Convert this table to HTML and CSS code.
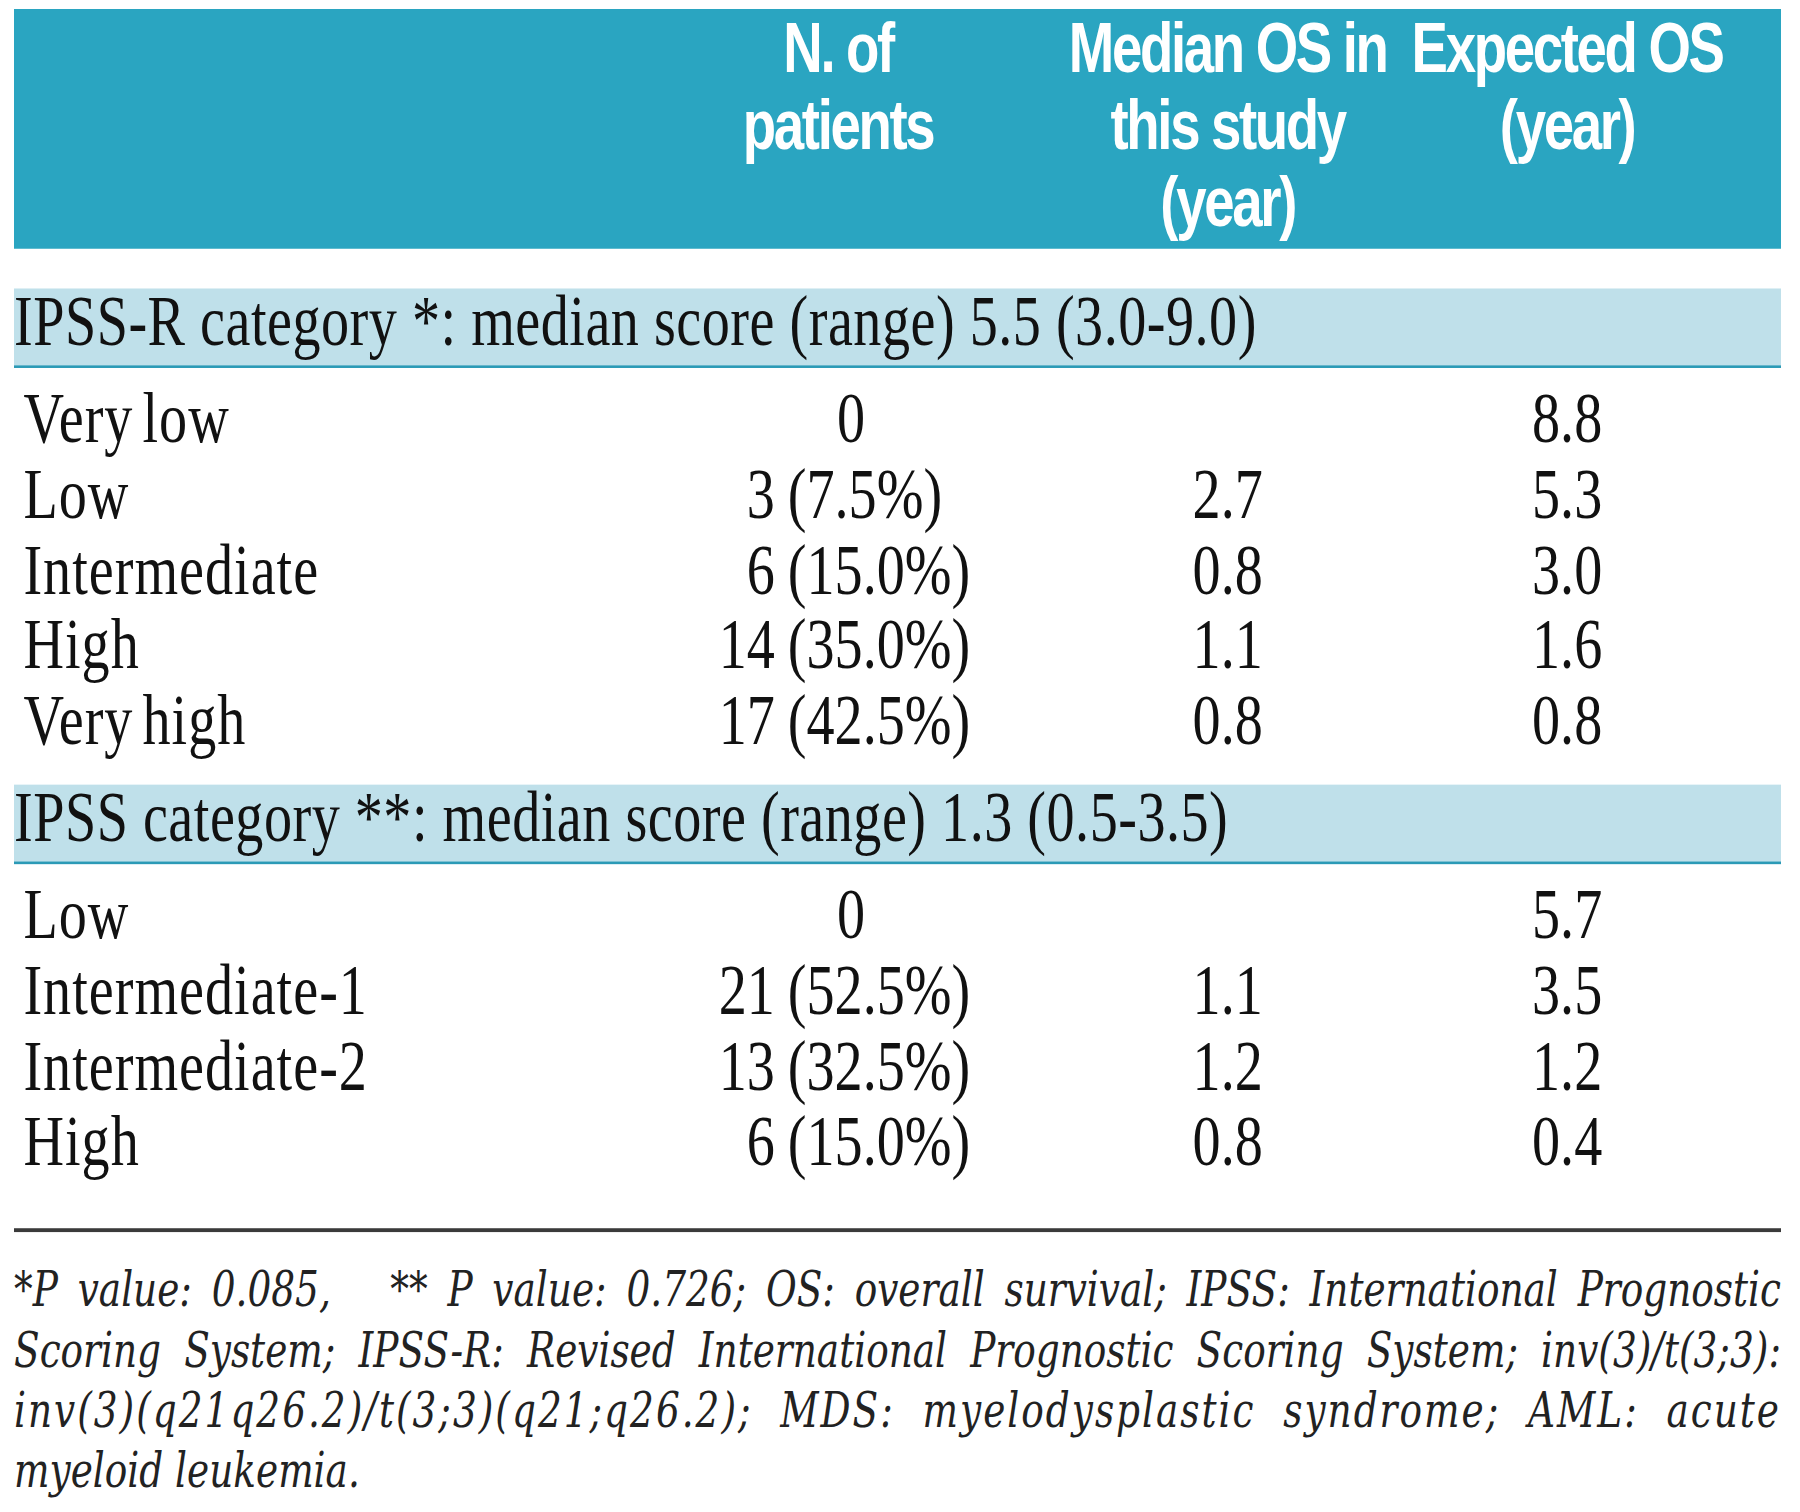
FILE: index.html
```html
<!DOCTYPE html>
<html lang="en">
<head>
<meta charset="utf-8">
<title>IPSS-R and IPSS categories</title>
<link rel="stylesheet" href="styles.css">
</head>
<body>
<div class="sheet">
  <div class="head">
    <div class="hc"></div>
    <div class="hc hc-n"><span>N. of</span><span>patients</span></div>
    <div class="hc"><span>Median OS in</span><span>this study</span><span>(year)</span></div>
    <div class="hc"><span>Expected OS</span><span>(year)</span></div>
  </div>

  <div class="band">IPSS-R category *: median score (range) 5.5 (3.0-9.0)</div>
  <div class="rows rows-a">
    <div class="lbl">Very low</div><div class="n zero">0</div><div class="v"></div><div class="v">8.8</div>
    <div class="lbl">Low</div><div class="n"><span class="c">3</span><span>(7.5%)</span></div><div class="v">2.7</div><div class="v">5.3</div>
    <div class="lbl">Intermediate</div><div class="n"><span class="c">6</span><span>(15.0%)</span></div><div class="v">0.8</div><div class="v">3.0</div>
    <div class="lbl">High</div><div class="n"><span class="c">14</span><span>(35.0%)</span></div><div class="v">1.1</div><div class="v">1.6</div>
    <div class="lbl">Very high</div><div class="n"><span class="c">17</span><span>(42.5%)</span></div><div class="v">0.8</div><div class="v">0.8</div>
  </div>

  <div class="band">IPSS category **: median score (range) 1.3 (0.5-3.5)</div>
  <div class="rows rows-b">
    <div class="lbl">Low</div><div class="n zero">0</div><div class="v"></div><div class="v">5.7</div>
    <div class="lbl">Intermediate-1</div><div class="n"><span class="c">21</span><span>(52.5%)</span></div><div class="v">1.1</div><div class="v">3.5</div>
    <div class="lbl">Intermediate-2</div><div class="n"><span class="c">13</span><span>(32.5%)</span></div><div class="v">1.2</div><div class="v">1.2</div>
    <div class="lbl">High</div><div class="n"><span class="c">6</span><span>(15.0%)</span></div><div class="v">0.8</div><div class="v">0.4</div>
  </div>

  <div class="rule"></div>

  <div class="notes">
    <div class="ln">*P value: 0.085,&nbsp;&nbsp; ** P value: 0.726; OS: overall survival; IPSS: International Prognostic</div>
    <div class="ln">Scoring System; IPSS-R: Revised International Prognostic Scoring System; inv(3)/t(3;3):</div>
    <div class="ln ln-wide">inv(3)(q21q26.2)/t(3;3)(q21;q26.2); MDS: myelodysplastic syndrome; AML: acute</div>
    <div class="ln last">myeloid leukemia.</div>
  </div>
</div>
</body>
</html>
```

FILE: styles.css
```css
html, body {
  margin: 0;
  background: #ffffff;
}

body {
  min-height: 100vh;
  box-sizing: border-box;
  padding: 9px 0 0 14px;
}

/* The source table is set in tall, condensed faces: the sheet is laid
   out at its real width and stretched vertically as a whole. */
.sheet {
  width: 1767px;
  transform: scaleY(1.282051);
  transform-origin: 0 0;
  color: #111111;
  font-family: "Liberation Serif", "Times New Roman", serif;
  font-size: 56.16px;
}

.head {
  display: grid;
  grid-template-columns: 585.8px 502.3px 251.2px 427.7px;
  height: 187.2px;
  box-sizing: border-box;
  padding-top: 0.8px;
  margin-bottom: 30.42px;
  background: #2aa5c1;
  color: #ffffff;
  font-family: "Liberation Sans", Arial, sans-serif;
  font-weight: 700;
  font-size: 54.6px;
  line-height: 60.06px;
  letter-spacing: -2.34px;
}

.hc {
  display: flex;
  flex-direction: column;
  align-items: center;
  white-space: nowrap;
}

.hc-n {
  padding-right: 25.7px;
}

.band {
  height: 60.06px;
  line-height: 50.7px;
  background: #bfe0ea;
  border-bottom: 2.34px solid #2b9ab6;
  white-space: nowrap;
  letter-spacing: 0.5px;
}

.rows {
  display: grid;
  grid-template-columns: 585.8px 502.3px 251.2px 427.7px;
  grid-auto-rows: 58.89px;
  line-height: 58.89px;
  padding-top: 10.14px;
  white-space: nowrap;
}

.rows-a {
  margin-bottom: 20.67px;
}

.lbl {
  padding-left: 9.4px;
  letter-spacing: 1px;
  word-spacing: -6px;
}

.n {
  display: flex;
}

.n .c {
  width: 188px;
  padding-right: 13px;
  box-sizing: border-box;
  text-align: right;
}

.n.zero {
  justify-content: center;
}

.v {
  text-align: center;
}

.rule {
  height: 2.34px;
  margin-top: 39px;
  background: #3a3a3a;
}

.notes {
  margin-top: 22.62px;
  font-family: "DejaVu Serif", serif;
  font-style: italic;
  font-size: 37.44px;
  line-height: 46.8px;
  color: #222222;
}

.ln {
  text-align: justify;
  text-align-last: justify;
}

.ln-wide {
  letter-spacing: 2px;
}

.ln.last {
  text-align-last: left;
}
```
